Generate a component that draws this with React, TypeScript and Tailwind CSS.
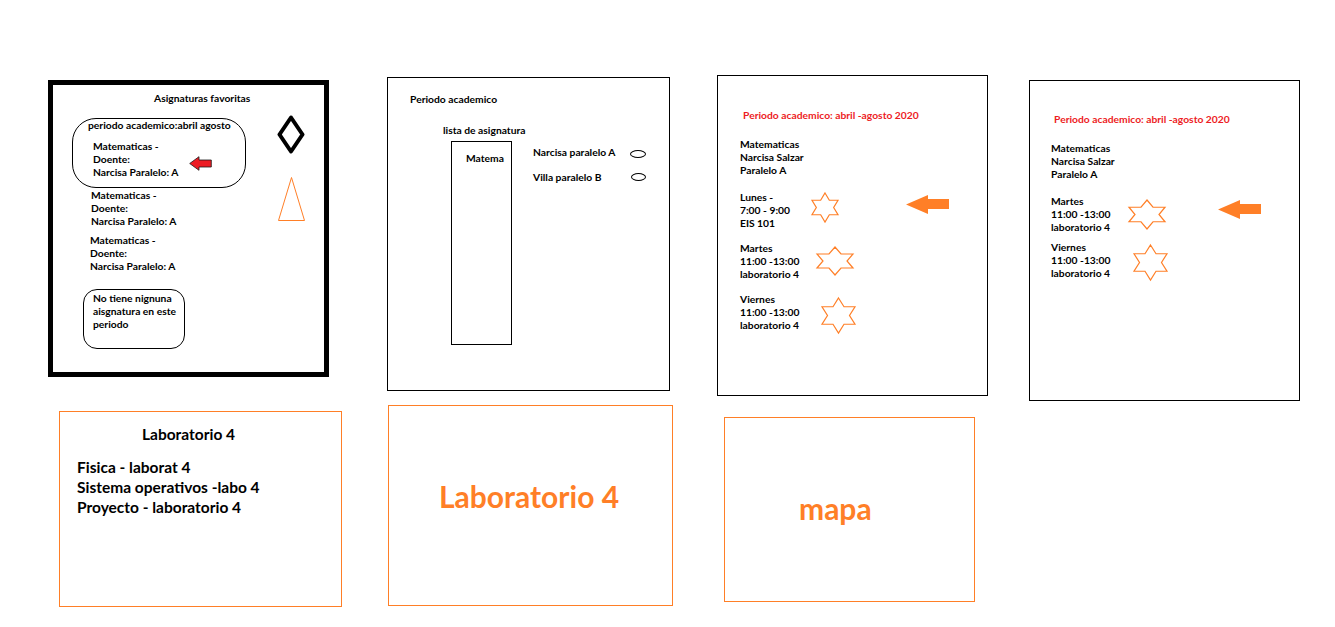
const ORANGE = '#ff7f27'

function Star({ w, h, className = '' }: { w: number; h: number; className?: string }) {
  return (
    <svg width={w} height={h} viewBox="6.7 0 86.6 100" preserveAspectRatio="none" className={`shrink-0 overflow-visible ${className}`}>
      <polygon
        points="50,0 64.43,25 93.3,25 78.87,50 93.3,75 64.43,75 50,100 35.57,75 6.7,75 21.13,50 6.7,25 35.57,25"
        fill="none"
        stroke={ORANGE}
        strokeWidth={1.2}
        vectorEffect="non-scaling-stroke"
      />
    </svg>
  )
}

function OrangeArrow({ className = '' }: { className?: string }) {
  return (
    <svg width={43} height={19} viewBox="0 0 43 19" className={`shrink-0 ${className}`}>
      <polygon points="0,9.5 22,0 22,4 43,4 43,14 22,14 22,19" fill={ORANGE} />
    </svg>
  )
}

function Lines({ lines, className = '' }: { lines: string[]; className?: string }) {
  return (
    <div className={`text-[10.3px] leading-[13px] font-bold whitespace-nowrap ${className}`}>
      {lines.map((l) => (
        <div key={l}>{l}</div>
      ))}
    </div>
  )
}

const materia = ['Matematicas -', 'Doente:', 'Narcisa Paralelo: A']
const horario = ['Matematicas', 'Narcisa Salzar', 'Paralelo A']

function Favoritas() {
  return (
    <div className="ml-[48px] mt-[5px] w-[281px] h-[297px] border-[5px] border-black flex shrink-0">
      <div className="w-[224px] flex flex-col items-start">
        <Lines lines={['Asignaturas favoritas']} className="ml-[101px] mt-[7px]" />
        <div className="ml-[19px] mt-[13px] w-[174px] h-[70px] border border-black rounded-[24px]">
          <Lines lines={['periodo academico:abril agosto']} className="ml-[15px]" />
          <div className="flex items-start mt-[8px]">
            <Lines lines={materia} className="ml-[20px] w-[96px]" />
            <svg width={23} height={15} viewBox="0 0 23 15" className="mt-[16px] shrink-0">
              <polygon points="0.7,7.5 10,0.7 10,4 22.3,4 22.3,11 10,11 10,14.3" fill="#ed1c24" stroke="#1a1a1a" strokeWidth={0.8} />
            </svg>
          </div>
        </div>
        <Lines lines={materia} className="ml-[38px] mt-[1px]" />
        <Lines lines={materia} className="ml-[37px] mt-[6px]" />
        <div className="ml-[30px] mt-[16px] w-[102px] h-[60px] border border-black rounded-[14px] pl-[9px] pt-[2px]">
          <Lines lines={['No tiene nignuna', 'aisgnatura en este', 'periodo']} />
        </div>
      </div>
      <div className="flex flex-col items-start">
        <svg width={28} height={39} viewBox="0 0 28 39" className="mt-[30px]">
          <polygon points="14,2.5 25.5,19.5 14,36.5 2.5,19.5" fill="none" stroke="#000" strokeWidth={4} strokeLinejoin="round" />
        </svg>
        <svg width={27} height={44} viewBox="0 0 27 44" className="ml-[1px] mt-[23px]">
          <polygon points="13.5,0.5 26.5,43.5 0.5,43.5" fill="none" stroke={ORANGE} strokeWidth={1} />
        </svg>
      </div>
    </div>
  )
}

function Periodo() {
  return (
    <div className="ml-[58px] mt-[2px] w-[283px] h-[314px] border border-black flex flex-col items-start shrink-0">
      <Lines lines={['Periodo academico']} className="ml-[22px] mt-[15px]" />
      <Lines lines={['lista de asignatura']} className="ml-[55px] mt-[18px]" />
      <div className="flex items-start mt-[4px] ml-[63px]">
        <div className="w-[61px] h-[204px] border border-black pl-[14px] pt-[10px]">
          <Lines lines={['Matema']} />
        </div>
        <div className="ml-[21px] flex flex-col">
          <div className="flex items-start mt-[5px]">
            <Lines lines={['Narcisa paralelo A']} className="w-[97px]" />
            <div className="mt-[4px] w-[16px] h-[8px] border border-black rounded-[50%]" />
          </div>
          <div className="flex items-start mt-[12px]">
            <Lines lines={['Villa paralelo B']} className="w-[98px]" />
            <div className="mt-[2px] w-[15px] h-[8px] border border-black rounded-[50%]" />
          </div>
        </div>
      </div>
    </div>
  )
}

function RedTitle({ className = '' }: { className?: string }) {
  return (
    <div className={`text-[10.3px] leading-[13px] font-bold text-[#ed1c24] whitespace-nowrap ${className}`}>
      Periodo academico: abril -agosto 2020
    </div>
  )
}

function Horario() {
  return (
    <div className="ml-[47px] w-[271px] h-[321px] border border-black flex flex-col items-start shrink-0">
      <RedTitle className="ml-[25px] mt-[33px]" />
      <Lines lines={horario} className="ml-[22px] mt-[16px]" />
      <div className="flex items-start ml-[22px] mt-[14px]">
        <Lines lines={['Lunes -', '7:00 - 9:00', 'EIS 101']} className="w-[72px]" />
        <Star w={26} h={29} className="mt-[2px]" />
        <OrangeArrow className="ml-[68px] mt-[4px]" />
      </div>
      <div className="flex items-start ml-[22px] mt-[12px]">
        <Lines lines={['Martes', '11:00 -13:00', 'laboratorio 4']} className="w-[72px]" />
        <Star w={36} h={28} className="ml-[5px] mt-[5px]" />
      </div>
      <div className="flex items-start ml-[22px] mt-[12px]">
        <Lines lines={['Viernes', '11:00 -13:00', 'laboratorio 4']} className="w-[72px]" />
        <Star w={33} h={35} className="ml-[10px] mt-[5px]" />
      </div>
    </div>
  )
}

function HorarioFav() {
  return (
    <div className="ml-[41px] mt-[5px] w-[271px] h-[321px] border border-black flex flex-col items-start shrink-0">
      <RedTitle className="ml-[24px] mt-[32px]" />
      <Lines lines={horario} className="ml-[21px] mt-[16px]" />
      <div className="flex items-start ml-[21px] mt-[14px]">
        <Lines lines={['Martes', '11:00 -13:00', 'laboratorio 4']} className="w-[78px]" />
        <Star w={36} h={29} className="mt-[5px]" />
        <OrangeArrow className="ml-[53px] mt-[5px]" />
      </div>
      <div className="flex items-start ml-[21px] mt-[7px]">
        <Lines lines={['Viernes', '11:00 -13:00', 'laboratorio 4']} className="w-[78px]" />
        <Star w={33} h={35} className="ml-[5px] mt-[4px]" />
      </div>
    </div>
  )
}

export default function App() {
  return (
    <div className="w-[1335px] h-[627px] bg-white overflow-hidden text-black font-['Lato',sans-serif]">
      <div className="flex items-start pt-[75px] h-[401px]">
        <Favoritas />
        <Periodo />
        <Horario />
        <HorarioFav />
      </div>
      <div className="flex items-start">
        <div className="ml-[59px] mt-[10px] w-[283px] h-[196px] border border-[#ff7f27] font-bold shrink-0">
          <div className="ml-[82px] mt-[13px] text-[15.5px] leading-[19px]">Laboratorio 4</div>
          <div className="ml-[17px] mt-[13px] text-[15.5px] leading-[20px] whitespace-nowrap">
            <div>Fisica - laborat 4</div>
            <div>Sistema operativos -labo 4</div>
            <div>Proyecto - laboratorio 4</div>
          </div>
        </div>
        <div className="ml-[46px] mt-[4px] w-[285px] h-[201px] border border-[#ff7f27] shrink-0">
          <div className="ml-[50px] mt-[72px] text-[30px] leading-[36px] font-bold text-[#ff7f27]">Laboratorio 4</div>
        </div>
        <div className="ml-[51px] mt-[16px] w-[251px] h-[185px] border border-[#ff7f27] shrink-0">
          <div className="ml-[74px] mt-[72px] text-[30px] leading-[36px] font-bold text-[#ff7f27]">mapa</div>
        </div>
      </div>
    </div>
  )
}
